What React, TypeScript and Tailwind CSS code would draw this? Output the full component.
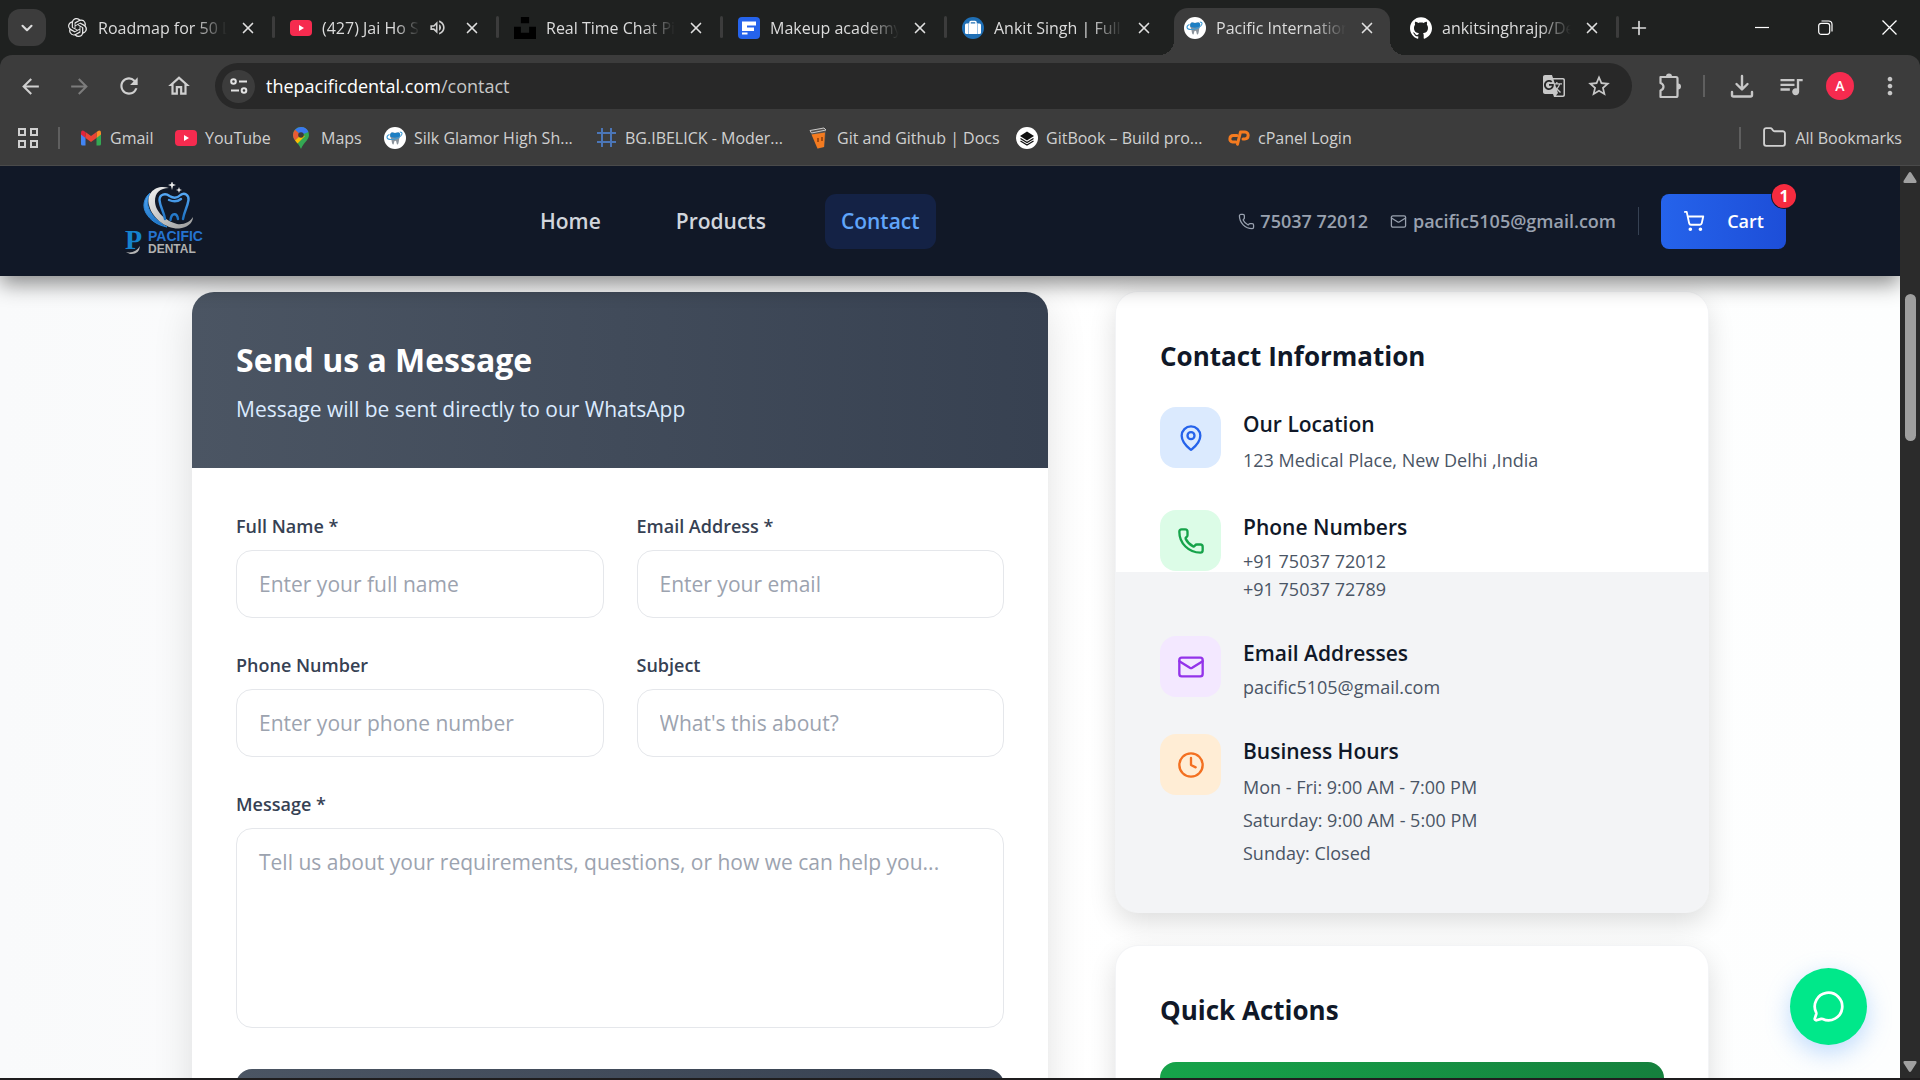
import React from "react";
import {
  ChevronDown,
  X,
  Phone,
  Mail,
  MapPin,
  Clock,
  ShoppingCart,
  MessageCircle,
  Folder,
  Plus,
} from "lucide-react";
import { SiOpenai, SiUnsplash, SiGithub } from "react-icons/si";
import {
  MdGTranslate,
  MdStarBorder,
  MdQueueMusic,
  MdMoreVert,
  MdOutlineHome,
  MdRefresh,
  MdArrowBack,
  MdArrowForward,
  MdOutlineVolumeUp,
} from "react-icons/md";

function YouTubeIcon() {
  return (
    <svg width="22" height="22" viewBox="0 0 22 22" aria-hidden="true">
      <rect x="0" y="3" width="22" height="16" rx="4" fill="#f62b4f" />
      <path d="M9 8v6l5-3z" fill="#fff" />
    </svg>
  );
}

function ToothBadge() {
  return (
    <svg width="22" height="22" viewBox="0 0 22 22" aria-hidden="true">
      <circle cx="11" cy="11" r="11" fill="#fff" />
      <path d="M7 6c1.500-1.200 2.800 0 4 0s3-1.200 4.500 0c1.500 1.500.5 3.500-.2 5.500-.5 2-.6 6-1.800 6s-.6-3.800-2.200-3.800-1 3.800-2.200 3.800S7.800 13.500 7 11.500 5.500 7.500 7 6z" fill="#8b949c" />
      <path d="M7 6c1.500-1.200 2.800 0 4 0s3-1.200 4.500 0c1 1 .8 2.200.4 3.500C13.500 11 9.500 11 6.600 10 6 8.500 6 7 7 6z" fill="#1d7fc4" />
      <path d="M5.500 7.500C2 9 2 12.500 7 12.500c5.500 0 10.500-3 11-5.500.3-1.300-.8-2-2.200-2" fill="none" stroke="#3c9ad6" strokeWidth="1.100" />
    </svg>
  );
}

function FIcon() {
  return (
    <svg width="22" height="22" viewBox="0 0 22 22" aria-hidden="true">
      <rect width="22" height="22" rx="4" fill="#2563eb" />
      <path d="M4 4.500h14v4H9v2h7v3.500H4zM4 15.500h5.500v2H4z" fill="#fff" />
    </svg>
  );
}

function BriefcaseIcon() {
  return (
    <svg width="22" height="22" viewBox="0 0 22 22" aria-hidden="true">
      <circle cx="11" cy="11" r="11" fill="#1f6fb5" />
      <path d="M8 7V5.500q0-1 1-1h4q1 0 1 1V7" fill="none" stroke="#fff" strokeWidth="1.500" />
      <rect x="3" y="6.500" width="16" height="10.500" rx="1.500" fill="#fff" />
      <path d="M6.500 7v10M15.500 7v10" stroke="#9fc4e6" strokeWidth="1" />
    </svg>
  );
}

function GmailIcon() {
  return (
    <svg width="20" height="16" viewBox="0 0 20 16" aria-hidden="true">
      <path d="M0 3v11q0 1.500 1.500 1.500H4.500V6z" fill="#4285f4" />
      <path d="M20 3v11q0 1.500-1.500 1.500H15.500V6z" fill="#34a853" />
      <path d="M15.500 2l2-1.300Q20 0 20 3v1.500l-4.500 3.500z" fill="#fb8c28" />
      <path d="M4.500 2l5.500 4 5.500-4v6L10 12 4.500 8z" fill="#ea4335" />
      <path d="M0 3Q0 0 2.500.7L4.500 2v6L0 4.500z" fill="#e0243c" />
    </svg>
  );
}

function MapsIcon() {
  return (
    <svg width="16" height="22" viewBox="0 0 16 22" aria-hidden="true">
      <path d="M8 0a8 8 0 0 1 8 8c0 5-5 7-8 14C5 15 0 13 0 8a8 8 0 0 1 8-8z" fill="#34a853" />
      <path d="M8 0a8 8 0 0 1 7.400 5L8 8 2 2.800A8 8 0 0 1 8 0z" fill="#3b78f0" />
      <path d="M2 2.800 8 8l-6 5.500A9 9 0 0 1 0 8a8 8 0 0 1 2-5.200z" fill="#ea5a35" />
      <path d="M8 8l-6 5.500 2.500 3L12 9z" fill="#fbbc04" />
      <circle cx="8" cy="8" r="2.800" fill="#3b3b3b" />
    </svg>
  );
}

function GridHashIcon() {
  return (
    <svg width="19" height="19" viewBox="0 0 19 19" aria-hidden="true">
      <path d="M5 .5v18M14 .5v18M.5 5h18M.5 14h18" stroke="#4b76b8" strokeWidth="2" strokeLinecap="round" />
    </svg>
  );
}

function GlassIcon() {
  return (
    <svg width="18" height="22" viewBox="0 0 18 22" aria-hidden="true">
      <path d="M1 3.500 14.500.500 17 3l-1.500 17-7 2z" fill="#55504d" />
      <path d="M2.500 7.500 16 5.500 15 20l-6.500 1.500z" fill="#f47b20" />
      <path d="M1 3.500 15 1l2 2-14.500 3z" fill="none" stroke="#c8c8c8" />
      <path d="M9 11v4M13 10v4" stroke="#8a3d08" strokeWidth="1.500" />
    </svg>
  );
}

function CPanelIcon() {
  return (
    <svg width="22" height="16" viewBox="0 0 22 16" aria-hidden="true" fill="none" stroke="#f47b20" strokeWidth="3" strokeLinecap="round" strokeLinejoin="round">
      <path d="M9 5.500H5.200C1 5.500.8 12 4.500 12H8" />
      <path d="M9.500 14.200 12.500 2H17c4.500 0 4 7-.2 7h-1.800" />
    </svg>
  );
}

function GitBookBadge() {
  return (
    <span className="flex size-[22px] items-center justify-center rounded-full bg-white text-black">
      <svg width="18" height="18" viewBox="0 0 18 18" aria-hidden="true">
        <path d="M2 7l7-4.500L16 7l-7 4.500z" fill="#111" />
        <path d="M2.500 9.500 9 13.500l6.500-4M2.500 12 9 16l6.500-4" fill="none" stroke="#111" strokeWidth="1.300" />
      </svg>
    </span>
  );
}

type Tab = { title: string; icon: React.ReactNode; active?: boolean; sound?: boolean; line?: boolean };

const tabs: Tab[] = [
  { title: "Roadmap for 50 L", icon: <SiOpenai size={19} color="#e8e8e8" />, line: true },
  { title: "(427) Jai Ho S", icon: <YouTubeIcon />, sound: true, line: true },
  { title: "Real Time Chat Pi", icon: <SiUnsplash size={22} color="#000" />, line: true },
  { title: "Makeup academy", icon: <FIcon />, line: true },
  { title: "Ankit Singh | Full", icon: <BriefcaseIcon /> },
  { title: "Pacific Internation", icon: <ToothBadge />, active: true },
  { title: "ankitsinghrajp/De", icon: <SiGithub size={22} color="#fff" />, line: true },
];

const bookmarks = [
  { label: "Gmail", icon: <GmailIcon />, width: "w-[94px]", gap: "gap-[9px]" },
  { label: "YouTube", icon: <YouTubeIcon />, width: "w-[118px]", gap: "gap-2" },
  { label: "Maps", icon: <MapsIcon />, width: "w-[91px]", gap: "gap-3" },
  { label: "Silk Glamor High Sh...", icon: <ToothBadge />, width: "w-[213px]", gap: "gap-2" },
  { label: "BG.IBELICK - Moder...", icon: <GridHashIcon />, width: "w-[212px]", gap: "gap-[9px]" },
  { label: "Git and Github | Docs", icon: <GlassIcon />, width: "w-[207px]", gap: "gap-[10px]" },
  { label: "GitBook – Build pro...", icon: <GitBookBadge />, width: "w-[212px]", gap: "gap-2" },
  { label: "cPanel Login", icon: <CPanelIcon />, width: "w-[130px]", gap: "gap-2" },
];

function TabItem({ tab }: { tab: Tab }) {
  return (
    <div className="relative flex h-full w-[224px] shrink-0 items-end px-1">
      <div
        className={
          tab.active
            ? "relative flex h-[47px] w-full items-center rounded-t-[14px] bg-[#3c3c3c] pr-[14px] pb-2 pl-[10px]"
            : "relative flex h-[47px] w-full items-center pr-[13px] pb-2 pl-3"
        }
      >
        {tab.active && (
          <>
            <span className="absolute bottom-0 -left-[15px] size-[15px] bg-[radial-gradient(circle_at_0_0,transparent_15px,#3c3c3c_15px)]" />
            <span className="absolute -right-[15px] bottom-0 size-[15px] bg-[radial-gradient(circle_at_100%_0,transparent_15px,#3c3c3c_15px)]" />
          </>
        )}
        <span className="flex w-[22px] shrink-0 justify-center">{tab.icon}</span>
        <span className="ml-[10px] min-w-0 flex-1 overflow-hidden text-base whitespace-nowrap text-[#dcdcdc] [mask-image:linear-gradient(to_right,#000_75%,transparent)]">
          {tab.title}
        </span>
        {tab.sound && <MdOutlineVolumeUp size={19} color="#d0d0d0" className="mr-1 ml-2 shrink-0" />}
        <button aria-label="Close tab" className="ml-3 shrink-0 text-[#e0e0e0]">
          <X size={18} strokeWidth={2.200} />
        </button>
      </div>
      {tab.line && <span className="absolute top-4 -right-px h-[22px] w-[3px] rounded bg-[#3c3c3c]" />}
    </div>
  );
}

function BrowserChrome() {
  return (
    <div className="shrink-0 bg-[#1f2120] text-[#dcdcdc]">
      <div className="flex h-[55px] items-stretch pl-2">
        <button aria-label="Search tabs" className="mt-[9px] mr-1 flex h-[37px] w-[38px] shrink-0 items-center justify-center rounded-xl bg-[#3c3c3c]">
          <ChevronDown size={18} strokeWidth={2.800} />
        </button>
        {tabs.map((tab) => (
          <TabItem key={tab.title} tab={tab} />
        ))}
        <button aria-label="New tab" className="ml-[10px] flex items-center">
          <Plus size={22} strokeWidth={1.800} />
        </button>
        <div className="mr-[23px] ml-auto flex items-center gap-[49px] text-white">
          <button aria-label="Minimize">
            <svg width="14" height="16" viewBox="0 0 14 16"><path d="M0 7.500h14" stroke="currentColor" strokeWidth="1.200" /></svg>
          </button>
          <button aria-label="Restore">
            <svg width="15" height="16" viewBox="0 0 15 16" fill="none" stroke="currentColor" strokeWidth="1.200">
              <rect x="0.700" y="3.300" width="11" height="11" rx="2.500" />
              <path d="M3.500 1h7q3.500 0 3.500 3.500v7" />
            </svg>
          </button>
          <button aria-label="Close window">
            <svg width="15" height="15" viewBox="0 0 15 15"><path d="M.5.5l14 14M14.500.5l-14 14" stroke="currentColor" strokeWidth="1.300" /></svg>
          </button>
        </div>
      </div>

      <div className="rounded-t-xl border-b border-[#4a4a4a] bg-[#3c3c3c]">
        <div className="flex h-[62px] items-center pr-4 pl-[18px]">
          <div className="flex w-[197px] shrink-0 items-center gap-[24px] text-[#d0d0d0]">
            <button aria-label="Back"><MdArrowBack size={25} /></button>
            <button aria-label="Forward" className="text-[#7c7c7c]"><MdArrowForward size={25} /></button>
            <button aria-label="Reload"><MdRefresh size={26} /></button>
            <button aria-label="Home"><MdOutlineHome size={26} /></button>
          </div>
          <div className="flex h-[46px] min-w-0 flex-1 items-center rounded-full bg-[#282828] pr-[20px] pl-[7px]">
            <button aria-label="Site information" className="flex size-[33px] shrink-0 items-center justify-center rounded-full bg-[#3c3c3c]">
              <svg width="18" height="16" viewBox="0 0 18 16" fill="none" stroke="#e3e3e3" strokeWidth="2">
                <circle cx="3.500" cy="3.500" r="2.300" /><path d="M9 3.500h8" />
                <circle cx="14" cy="12.500" r="2.300" /><path d="M1 12.500h8" />
              </svg>
            </button>
            <div className="ml-[11px] flex-1 text-lg text-white">
              thepacificdental.com<span className="text-[#c7c7c7]">/contact</span>
            </div>
            <button aria-label="Translate" className="text-[#c7c7c7]"><MdGTranslate size={24} /></button>
            <button aria-label="Bookmark" className="ml-5 text-[#c7c7c7]"><MdStarBorder size={26} /></button>
          </div>
          <div className="ml-[26px] flex shrink-0 items-center text-[#c7c7c7]">
            <button aria-label="Extensions">
              <svg width="24" height="28" viewBox="0 0 24 28" fill="none" stroke="currentColor" strokeWidth="2.200" strokeLinejoin="round">
                <path d="M2.500 5H18q1.500 0 1.500 1.500v17q0 1.500-1.500 1.500H2.500v-6.500c4-1.500 4-6 0-7.500z" />
                <path d="M8 4.500a3 3 0 0 1 6 0zM20 11.500a3 3 0 0 1 0 6z" fill="currentColor" stroke="none" />
              </svg>
            </button>
            <span className="ml-[21px] h-[22px] w-[2px] bg-[#5f5f5f]" />
            <button aria-label="Downloads" className="ml-[25px]">
              <svg width="24" height="24" viewBox="0 0 24 24" fill="none" stroke="currentColor" strokeWidth="2.400" strokeLinecap="round" strokeLinejoin="round">
                <path d="M12 2v13M6.500 10l5.500 5.500 5.500-5.500M2 18v3q0 1.500 1.500 1.500h17q1.500 0 1.500-1.500v-3" />
              </svg>
            </button>
            <button aria-label="Media" className="ml-[23px]"><MdQueueMusic size={28} /></button>
            <button aria-label="Profile" className="ml-[21px] flex size-[28px] items-center justify-center rounded-full bg-[#f62b4f] text-sm font-semibold text-white">A</button>
            <button aria-label="Menu" className="ml-[22px]"><MdMoreVert size={28} /></button>
          </div>
        </div>
        <div className="flex h-[48px] items-center pb-[7px] text-base whitespace-nowrap text-[#d0d0d0]">
          <svg width="22" height="20" viewBox="0 0 22 20" className="ml-[17px] shrink-0" fill="none" stroke="#d0d0d0" strokeWidth="2">
            <rect x="2" y="1" width="6" height="6" /><rect x="14" y="1" width="6" height="6" />
            <rect x="2" y="13" width="6" height="6" /><rect x="14" y="13" width="6" height="6" />
          </svg>
          <span className="mr-[21px] ml-[19px] h-[22px] w-[2px] bg-[#5f5f5f]" />
          {bookmarks.map((b) => (
            <a key={b.label} href="#" className={`flex shrink-0 items-center ${b.width} ${b.gap}`}>
              <span className="shrink-0">{b.icon}</span>
              {b.label}
            </a>
          ))}
          <span className="ml-auto h-[22px] w-[2px] bg-[#5f5f5f]" />
          <button className="mr-[18px] ml-[21px] flex items-center gap-2">
            <Folder size={25} strokeWidth={1.800} />
            All Bookmarks
          </button>
        </div>
      </div>
    </div>
  );
}

function Logo() {
  return (
    <svg width="80" height="74" viewBox="0 0 80 74" role="img" aria-label="Pacific Dental">
      <defs>
        <linearGradient id="silver" x1="0" y1="0" x2="1" y2="1">
          <stop offset="0" stopColor="#f2f2f2" /><stop offset="1" stopColor="#9a9a9a" />
        </linearGradient>
        <linearGradient id="blue" x1="0" y1="0" x2="0" y2="1">
          <stop offset="0" stopColor="#55a8f5" /><stop offset="1" stopColor="#1a6fc0" />
        </linearGradient>
      </defs>
      <path d="M26 11C20 16 18 24 22 31 26 38 33 43 43 45 33 39 26 32 24 24 23 19 24 15 26 11z" fill="url(#blue)" stroke="#2a86d8" strokeWidth="1" />
      <path d="M45 6C33 2 22 10 25 23 28 36 42 47 55 46.500 63 46 69 41 69 35 66 40 60 43 53 42 42 39 31 30 31 19 31 11 36 6 45 6z" fill="url(#silver)" />
      <path d="M41 37C40 30 36 25 35.500 18c0-6 6-7 10-4 4 2.500 8 2 11-1 4-3 8.500 0 8 5-1 7-4.500 12-5.500 19M45 18q7 3 12-1M46.500 38c1-7.500 6.500-7.500 7.500-1" fill="none" stroke="url(#blue)" strokeWidth="2.400" strokeLinecap="round" />
      <path d="M48-1l1 3 3 1-3 1-1 4-1-4-3-1 3-1zM55 5l.8 2.200L58 8l-2.200.8L55 11l-.8-2.200L52 8l2.200-.8z" fill="#ececec" />
      <path d="M2 70q9 2 14-6-1 9-10 8z" fill="#b5b5b5" />
      <text x="1" y="67" fontFamily="Liberation Serif, serif" fontSize="28" fontWeight="700" fill="#1583cc">P</text>
      <text x="24" y="59" fontFamily="Liberation Sans, sans-serif" fontSize="14" fontWeight="700" fill="#2573cf">PACIFIC</text>
      <text x="24" y="71" fontFamily="Liberation Sans, sans-serif" fontSize="12" fontWeight="700" fill="#b0b0b0">DENTAL</text>
    </svg>
  );
}

function SiteHeader() {
  return (
    <header className="relative z-10 flex h-[110px] shrink-0 items-center bg-[#111827] pr-[114px] pl-[124px] shadow-[0_8px_20px_rgba(0,0,0,0.45)]">
      <a href="#" className="mb-1 shrink-0"><Logo /></a>
      <nav className="ml-[320px] flex items-center gap-[43px] text-[21px] font-semibold text-gray-300">
        <a href="#" className="flex h-[55px] items-center px-4 pt-[2px]">Home</a>
        <a href="#" className="flex h-[55px] items-center px-4 pt-[2px]">Products</a>
        <a href="#" className="flex h-[55px] items-center rounded-[11px] bg-[#142245] px-4 pt-[2px] text-[#60a5fa]">Contact</a>
      </nav>
      <div className="ml-auto flex items-center text-lg font-semibold text-gray-400">
        <a href="#" className="flex items-center gap-[5px]"><Phone size={17} strokeWidth={1.800} />75037 72012</a>
        <a href="#" className="ml-[22px] flex items-center gap-[6px]"><Mail size={17} strokeWidth={1.800} />pacific5105@gmail.com</a>
        <span className="ml-[22px] h-7 w-px bg-gray-700" />
        <button className="relative ml-[22px] flex h-[55px] w-[125px] items-center justify-center gap-[22px] rounded-lg bg-[linear-gradient(to_right,#2563eb,#1d4ed8)] text-white">
          <ShoppingCart size={22} />
          Cart
          <span className="absolute -top-[10px] -right-[10px] flex size-[24px] items-center justify-center rounded-full bg-[#f62b3f] text-base font-bold ring-1 ring-[#111827]">1</span>
        </button>
      </div>
    </header>
  );
}

function Field({ id, label, placeholder, type }: { id: string; label: string; placeholder: string; type: string }) {
  return (
    <div>
      <label htmlFor={id} className="mb-[10px] block text-lg leading-[28px] font-semibold text-gray-700">{label}</label>
      <input
        id={id}
        type={type}
        placeholder={placeholder}
        className="block h-[68px] w-full rounded-2xl border border-gray-200 px-[22px] text-[21px] placeholder:text-[#9ca3af]"
      />
    </div>
  );
}

function MessageForm() {
  return (
    <section className="rounded-[22px] bg-white shadow-[0_12px_40px_rgba(0,0,0,0.12)]">
      <div className="rounded-t-[22px] bg-[linear-gradient(to_right,#4b5563,#374151)] px-[44px] pt-[46px] pb-[42px]">
        <h2 className="text-[32px] leading-[44px] font-bold text-white">Send us a Message</h2>
        <p className="mt-[10px] text-[21px] leading-[34px] text-blue-100">Message will be sent directly to our WhatsApp</p>
      </div>
      <form className="p-[44px]">
        <div className="grid grid-cols-2 gap-[33px]">
          <Field id="name" type="text" label="Full Name *" placeholder="Enter your full name" />
          <Field id="email" type="email" label="Email Address *" placeholder="Enter your email" />
          <Field id="phone" type="tel" label="Phone Number" placeholder="Enter your phone number" />
          <Field id="subject" type="text" label="Subject" placeholder="What's this about?" />
        </div>
        <label htmlFor="message" className="mt-[33px] mb-[10px] block text-lg leading-[28px] font-semibold text-gray-700">Message *</label>
        <textarea
          id="message"
          placeholder="Tell us about your requirements, questions, or how we can help you..."
          className="block h-[200px] w-full resize-none rounded-2xl border border-gray-200 px-[22px] py-[17px] text-[21px] leading-[33px] placeholder:text-[#9ca3af]"
        />
        <button type="button" aria-label="Send message" className="mt-[41px] block h-[77px] w-full rounded-2xl bg-[linear-gradient(to_right,#4b5563,#374151)]" />
      </form>
    </section>
  );
}

const contactItems = [
  { title: "Our Location", icon: MapPin, box: "bg-[#dbeafe] text-[#2563eb]", lines: ["123 Medical Place, New Delhi ,India"], text: "leading-[33px]" },
  { title: "Phone Numbers", icon: Phone, box: "bg-[#dcfce7] text-[#16a34a]", lines: ["+91 75037 72012", "+91 75037 72789"], text: "leading-[28px]" },
  { title: "Email Addresses", icon: Mail, box: "bg-[#f3e8ff] text-[#9333ea]", lines: ["pacific5105@gmail.com"], text: "leading-[28px]" },
  { title: "Business Hours", icon: Clock, box: "bg-[#ffedd5] text-[#f37021]", lines: ["Mon - Fri: 9:00 AM - 7:00 PM", "Saturday: 9:00 AM - 5:00 PM", "Sunday: Closed"], text: "leading-[33px]" },
];

function ContactInfo() {
  return (
    <section className="rounded-[22px] bg-[linear-gradient(to_bottom,#fff_280px,#f3f4f6_280px)] px-[44px] pt-[45px] pb-[42px] shadow-[0_10px_28px_rgba(0,0,0,0.14)] ring-1 ring-gray-100">
      <h3 className="mb-[32px] text-[26px] leading-[38px] font-bold text-gray-900">Contact Information</h3>
      <div className="flex flex-col gap-[33px]">
        {contactItems.map(({ title, icon: Icon, box, lines, text }) => (
          <div key={title} className="flex items-start gap-[22px]">
            <div className={`flex size-[61px] shrink-0 items-center justify-center rounded-2xl ${box}`}>
              <Icon size={28} strokeWidth={2} />
            </div>
            <div>
              <h4 className="text-[21px] leading-[34px] font-semibold text-gray-900">{title}</h4>
              <div className={`mt-[3px] text-lg text-gray-600 ${text}`}>
                {lines.map((line) => <p key={line}>{line}</p>)}
              </div>
            </div>
          </div>
        ))}
      </div>
    </section>
  );
}

function QuickActions() {
  return (
    <section className="rounded-[22px] bg-white px-[44px] pt-[45px] pb-[44px] shadow-[0_10px_28px_rgba(0,0,0,0.14)] ring-1 ring-gray-100">
      <h3 className="mb-[33px] text-[26px] leading-[38px] font-bold text-gray-900">Quick Actions</h3>
      <button aria-label="WhatsApp" className="block h-[66px] w-full rounded-2xl bg-[linear-gradient(to_right,#16a34a,#15803d)]" />
    </section>
  );
}

export default function App() {
  return (
    <div className="flex h-screen flex-col overflow-hidden border-b-2 border-[#1f1d1e] bg-[#fdfefe] font-['Open_Sans',sans-serif]">
      <BrowserChrome />
      <div className="flex min-h-0 flex-1">
        <div className="relative flex min-w-0 flex-1 flex-col overflow-hidden bg-[linear-gradient(to_right,#f9fafb,#ffffff_50%,#fdfefe)]">
          <SiteHeader />
          <main className="mx-auto mt-4 grid min-h-0 w-full max-w-[1516px] flex-1 grid-cols-[856fr_592fr] items-start gap-[68px]">
            <MessageForm />
            <div className="flex flex-col gap-[34px]">
              <ContactInfo />
              <QuickActions />
            </div>
          </main>
          <button aria-label="Open chat" className="absolute right-[33px] bottom-[33px] flex size-[77px] items-center justify-center rounded-full bg-[#00e88a] text-white shadow-[0_8px_24px_rgba(96,165,250,0.4)]">
            <MessageCircle size={33} strokeWidth={2} />
          </button>
        </div>
        <div className="flex w-5 shrink-0 flex-col items-center bg-[#2b2b2b]">
          <svg width="14" height="11" viewBox="0 0 14 11" className="mt-[6px]" aria-hidden="true"><path d="M7 0q.8 0 1.200.8L13.500 9q.5 2-1 2h-11q-1.500 0-1-2L5.800.8Q6.200 0 7 0z" fill="#a0a0a0" /></svg>
          <div className="mt-[111px] h-[147px] w-[11px] rounded-full bg-[#9f9f9f]" />
          <svg width="14" height="11" viewBox="0 0 14 11" className="mt-auto mb-[6px] rotate-180" aria-hidden="true"><path d="M7 0q.8 0 1.200.8L13.500 9q.5 2-1 2h-11q-1.500 0-1-2L5.800.8Q6.200 0 7 0z" fill="#a0a0a0" /></svg>
        </div>
      </div>
    </div>
  );
}
